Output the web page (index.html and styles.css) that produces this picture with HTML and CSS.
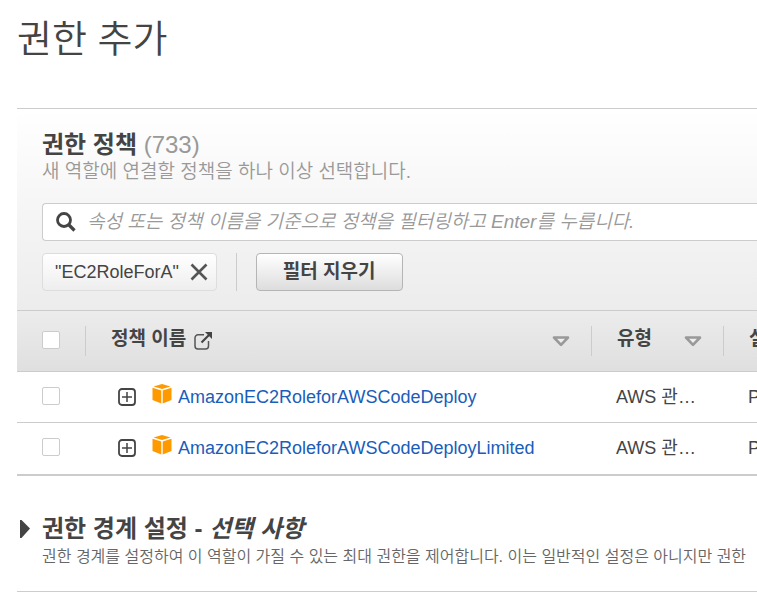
FILE: index.html
```html
<!DOCTYPE html>
<html lang="ko">
<head>
<meta charset="utf-8">
<title>권한 추가</title>
<meta name="viewport" content="width=device-width, initial-scale=1">
<link rel="stylesheet" href="styles.css">
</head>
<body>
<svg class="sprite" aria-hidden="true">
  <symbol id="plus" viewBox="0 0 18 18"><rect x="1" y="1" width="16" height="16" rx="3" fill="#fff" stroke="#444" stroke-width="1.800"/><path d="M4 9h10M9 4v10" stroke="#444" stroke-width="1.500"/></symbol>
  <symbol id="cube" viewBox="0 0 20 20"><path d="M10 0l8.500 2.500L10 5 1.500 2.500z" fill="#ff9900"/><path d="M.500 3.800l8.800 2.700V19.500L.500 16z" fill="#ff9900"/><path d="M19.500 3.800l-8.800 2.700V19.500l8.800-3.500z" fill="#ff9900"/></symbol>
  <symbol id="sort" viewBox="0 0 18 11"><path d="M2 1.500h14L9 8.800z" fill="#eee" stroke="#999" stroke-width="2.600" stroke-linejoin="round"/></symbol>
</svg>
<main class="page">
  <h1 class="title">권한 추가</h1>
  <section class="panel">
    <div class="tools">
      <h2 class="heading">권한 정책 <span class="count">(733)</span></h2>
      <p class="hint">새 역할에 연결할 정책을 하나 이상 선택합니다.</p>
      <label class="search">
        <svg width="20" height="20" viewBox="0 0 20 20" aria-hidden="true"><circle cx="8" cy="8" r="6.500" fill="none" stroke="#444" stroke-width="2.800"/><path d="M12.500 12.500l6 6" stroke="#444" stroke-width="3.200"/></svg>
        <input class="query" type="text" aria-label="정책 필터" placeholder="속성 또는 정책 이름을 기준으로 정책을 필터링하고 Enter를 누릅니다.">
      </label>
      <div class="filters">
        <span class="chip">"EC2RoleForA"
          <button class="remove" type="button" aria-label="필터 제거"><svg width="18" height="18" viewBox="0 0 18 18"><path d="M1.500 1.500l15 15M16.500 1.500l-15 15" stroke="#555" stroke-width="2.600"/></svg></button>
        </span>
        <span class="rule"></span>
        <button class="clear" type="button">필터 지우기</button>
      </div>
    </div>
    <table class="policies">
      <colgroup><col class="col-check"><col><col class="col-type"><col class="col-desc"></colgroup>
      <thead>
        <tr>
          <th class="check"><input type="checkbox" aria-label="모두 선택"></th>
          <th><div class="head"><span class="label">정책 이름</span>
            <svg class="external" width="18" height="18" viewBox="0 0 18 18" aria-hidden="true"><path d="M10 2.800H4a3 3 0 0 0-3 3V14a3 3 0 0 0 3 3h7.500a3 3 0 0 0 3-3V9" fill="none" stroke="#555" stroke-width="1.500"/><path d="M7.500 10.500L15 3" stroke="#444" stroke-width="2.200"/><path d="M11 0h7v7z" fill="#444"/></svg>
            <svg class="sort" width="18" height="11" aria-hidden="true"><use href="#sort"/></svg></div></th>
          <th><div class="head"><span class="label">유형</span> <svg class="sort" width="18" height="11" aria-hidden="true"><use href="#sort"/></svg></div></th>
          <th><div class="head"><span class="label">설명</span></div></th>
        </tr>
      </thead>
      <tbody>
        <tr>
          <td class="check"><input type="checkbox" aria-label="AmazonEC2RoleforAWSCodeDeploy"></td>
          <td><div class="name"><button class="expand" type="button" aria-label="펼치기"><svg width="18" height="18"><use href="#plus"/></svg></button><svg class="cube" width="20" height="20" aria-hidden="true"><use href="#cube"/></svg><a href="#">AmazonEC2RoleforAWSCodeDeploy</a></div></td>
          <td>AWS 관…</td>
          <td>Provides</td>
        </tr>
        <tr>
          <td class="check"><input type="checkbox" aria-label="AmazonEC2RoleforAWSCodeDeployLimited"></td>
          <td><div class="name"><button class="expand" type="button" aria-label="펼치기"><svg width="18" height="18"><use href="#plus"/></svg></button><svg class="cube" width="20" height="20" aria-hidden="true"><use href="#cube"/></svg><a href="#">AmazonEC2RoleforAWSCodeDeployLimited</a></div></td>
          <td>AWS 관…</td>
          <td>Provides</td>
        </tr>
      </tbody>
    </table>
  </section>
  <section class="boundary">
    <button class="toggle" type="button" aria-label="권한 경계 설정 펼치기"><svg width="10" height="18" viewBox="0 0 10 18"><path d="M0 0h1.500L10 8.500 1.500 18H0z" fill="#444"/></svg></button>
    <div class="summary">
      <h2 class="heading">권한 경계 설정 - <em>선택 사항</em></h2>
      <p class="note">권한 경계를 설정하여 이 역할이 가질 수 있는 최대 권한을 제어합니다. 이는 일반적인 설정은 아니지만 권한</p>
    </div>
  </section>
</main>
</body>
</html>
```
FILE: styles.css
```css
* { box-sizing: border-box; }
body {
  margin: 0;
  overflow-x: hidden;
  background: #fff;
  color: #444;
  font: 18px/24px "Liberation Sans", "Noto Sans CJK KR", sans-serif;
}
h1, h2, p { margin: 0; }
button, input { font: inherit; color: inherit; }
button { padding: 0; border: 0; background: none; cursor: pointer; }
svg { display: block; flex: none; }
.sprite { position: absolute; width: 0; height: 0; }
.page { padding: 14px 0 0 17px; }
.title {
  font-size: 38px;
  line-height: 50px;
  font-weight: 350;
  margin-bottom: 44px;
}
.panel { border-top: 1px solid #ccc; border-bottom: 2px solid #ccc; }
.tools {
  padding: 21px 0 19px 25px;
  background: linear-gradient(#fff, #ececec);
}
.heading { font-size: 24px; line-height: 30px; font-weight: 700; white-space: nowrap; }
.count { font-weight: 400; color: #999; }
.hint { font-size: 19px; line-height: 24px; color: #999; font-weight: 350; white-space: nowrap; }
.search {
  display: flex;
  align-items: center;
  gap: 11px;
  height: 38px;
  margin-top: 19px;
  padding-left: 13px;
  border: 1px solid #ccc;
  border-right: 0;
  border-radius: 4px 0 0 4px;
  background: #fff;
}
.query {
  flex: 1;
  min-width: 0;
  height: 32px;
  padding: 0;
  border: 0;
  outline: 0;
  background: none;
  font-size: 19px;
  font-weight: 350;
}
.query::placeholder { color: #999; opacity: 1; font-style: italic; }
.filters { display: flex; margin-top: 12px; height: 38px; }
.chip {
  display: flex;
  align-items: center;
  gap: 11px;
  padding: 0 8px 0 12px;
  border: 1px solid #ddd;
  border-radius: 4px;
  background: linear-gradient(#fff, #eee);
}
.rule { width: 1px; margin: 0 19px; background: #ccc; }
.clear {
  padding: 0 26px;
  border: 1px solid #b5b5b5;
  border-radius: 4px;
  background: linear-gradient(#fff, #ddd);
  font-size: 19px;
  font-weight: 700;
}
.policies { width: 100%; table-layout: fixed; border-collapse: collapse; }
.col-check { width: 68px; }
.col-type { width: 132px; }
.col-desc { width: 34px; }
thead { background: linear-gradient(#ececec, #dfdfdf); }
th, td { padding: 0; overflow: hidden; text-align: left; white-space: nowrap; }
th { height: 61px; border-top: 1px solid #ccc; border-bottom: 1px solid #ccc; }
td { height: 51px; padding-left: 25px; }
tbody tr + tr { border-top: 1px solid #ccc; }
.check { padding: 0 0 3px 25px; }
.check input {
  display: block;
  appearance: none;
  width: 18px;
  height: 18px;
  margin: 0;
  border: 1px solid #ccc;
  border-radius: 2px;
  background: #fff;
}
.head {
  display: flex;
  align-items: center;
  gap: 8px;
  height: 30px;
  padding: 0 21px 0 25px;
  border-left: 1px solid #ccc;
  font-size: 19px;
}
.label { padding-bottom: 4px; }
.sort { margin-left: auto; }
.name { display: flex; align-items: center; padding-left: 8px; }
.cube { margin: 0 6px 6px 16px; }
a { color: #1a5dba; text-decoration: none; }
.boundary {
  display: flex;
  gap: 12px;
  padding: 38px 0 21px 3px;
  border-bottom: 1px solid #ccc;
}
.toggle { height: 30px; }
.summary { min-width: 0; overflow: hidden; }
.note { font-size: 16px; line-height: 26px; color: #666; font-weight: 350; white-space: nowrap; }
```
